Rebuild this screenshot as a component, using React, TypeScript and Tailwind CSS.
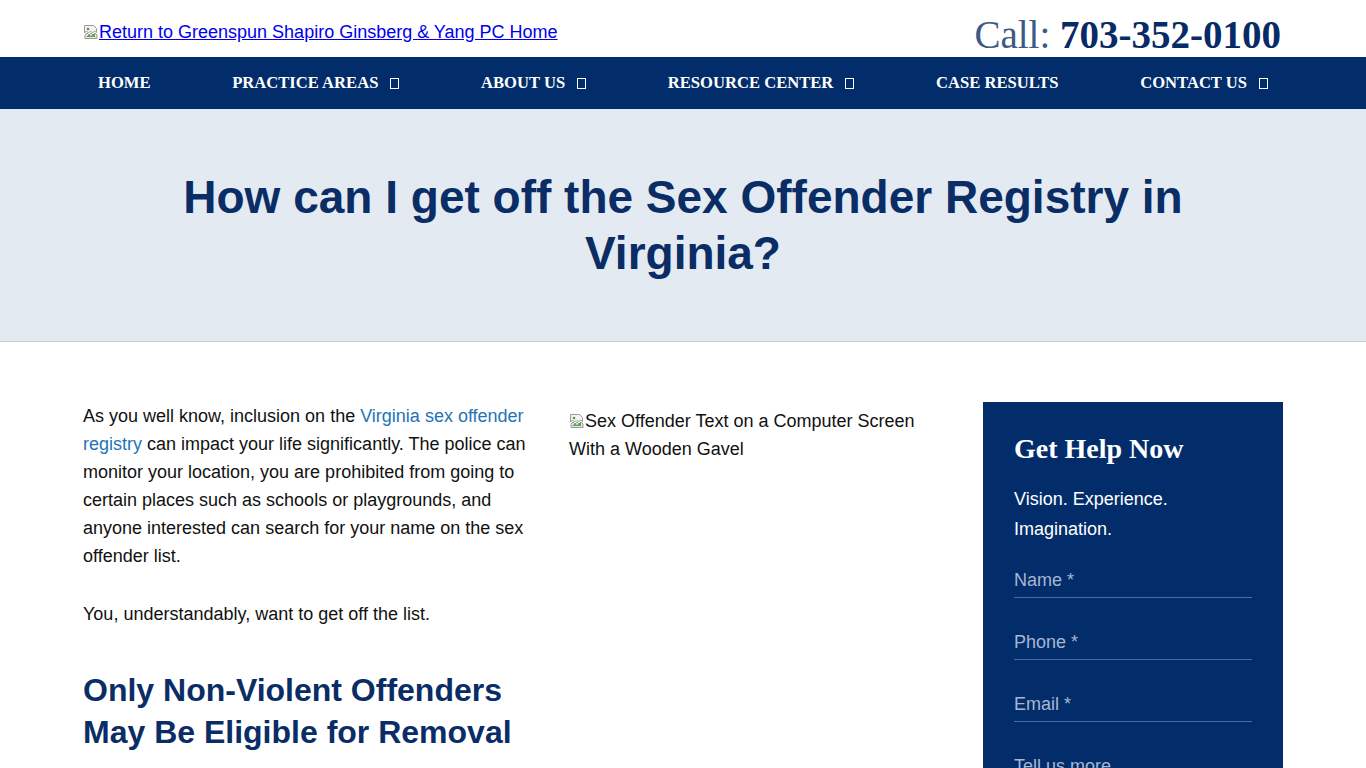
function Tofu() {
  return <span className="ml-[12px] inline-block h-[11px] w-[9px] border border-white align-[-1px]" />;
}

function BrokenImage() {
  return (
    <svg width="16" height="16" viewBox="0 0 16 16" className="inline-block align-[-2px]">
      <path d="M1.5 1.5h9l3 3v4l-2 -1.5-2 2-2-2-2 2-2-2-2 2z" fill="#f4f4f4" stroke="#9a9a9a" />
      <path d="M2 11l2-2 2 2 2-2 2 2 2-2 2 2v3.5H2z" fill="#e6e6e6" stroke="#9a9a9a" />
      <circle cx="5" cy="5" r="1.3" fill="#4a9e3a" />
      <path d="M3 13l3-2.5 2 1.5 4-3v4z" fill="#5aa845" />
    </svg>
  );
}

const navItems = [
  { label: "Home", drop: false },
  { label: "Practice Areas", drop: true },
  { label: "About Us", drop: true },
  { label: "Resource Center", drop: true },
  { label: "Case Results", drop: false },
  { label: "Contact Us", drop: true },
];

export default function App() {
  return (
    <div className="min-h-screen bg-white font-['Liberation_Sans',Arial,sans-serif] text-[18px] text-[#111]">
      {/* Header */}
      <header className="mx-auto flex h-[57px] max-w-[1200px] items-center justify-between">
        <a href="#" className="mt-[7px] flex items-center text-[18px] text-[#0000ee] underline">
          <BrokenImage />
          <span>Return to Greenspun Shapiro Ginsberg &amp; Yang PC Home</span>
        </a>
        <div className="mt-[12px] pr-[2px] font-['Liberation_Serif',serif] text-[39px] leading-none text-[#3c5a84]">
          Call: <span className="font-bold text-[#062b66]">703-352-0100</span>
        </div>
      </header>

      {/* Nav */}
      <nav className="bg-[#022d6a]">
        <ul className="mx-auto flex h-[52px] max-w-[1200px] items-center justify-between">
          {navItems.map((item) => (
            <li
              key={item.label}
              className="px-[15px] font-['Liberation_Serif',serif] text-[16.6px] font-bold uppercase text-white"
            >
              {item.label}
              {item.drop && <Tofu />}
            </li>
          ))}
        </ul>
      </nav>

      {/* Hero */}
      <section className="border-b border-[#c8ced6] bg-[#e4eaf2] py-[60px]">
        <h1 className="mx-auto max-w-[1060px] text-center text-[46px] font-bold leading-[56px] text-[#0a2d66]">
          How can I get off the Sex Offender Registry in Virginia?
        </h1>
      </section>

      {/* Content */}
      <main className="mx-auto flex max-w-[1200px] gap-[36px] pt-[60px]">
        <div className="flex flex-1 gap-[36px]">
          <article className="w-[450px] leading-[28px]">
            <p className="mb-[30px]">
              As you well know, inclusion on the{" "}
              <a href="#" className="text-[#1f73b7]">
                Virginia sex offender registry
              </a>{" "}
              can impact your life significantly. The police can monitor your location, you are prohibited from going to
              certain places such as schools or playgrounds, and anyone interested can search for your name on the sex
              offender list.
            </p>
            <p>You, understandably, want to get off the list.</p>
            <h2 className="mt-[41px] text-[32px] font-bold leading-[42px] text-[#0a2d66]">
              Only Non-Violent Offenders May Be Eligible for Removal
            </h2>
          </article>
          <div className="flex-1 pt-[5px] leading-[28px]">
            <BrokenImage />
            Sex Offender Text on a Computer Screen With a Wooden Gavel
          </div>
        </div>

        {/* Sidebar */}
        <aside className="h-[400px] w-[300px] bg-[#022d6a] px-[31px] pt-[30px] text-white">
          <h3 className="font-['Liberation_Serif',serif] text-[28px] font-bold leading-[34px]">Get Help Now</h3>
          <p className="mt-[18px] w-[180px] leading-[30px]">Vision. Experience. Imagination.</p>
          <form className="mt-[22px]">
            {["Name *", "Phone *", "Email *", "Tell us more"].map((label) => (
              <div key={label} className="mb-[30px] border-b border-[#4d6c9e] pb-[3px]">
                <input
                  placeholder={label}
                  className="w-full bg-transparent leading-[28px] text-white outline-none placeholder:text-[#a7b6d0]"
                />
              </div>
            ))}
          </form>
        </aside>
      </main>
    </div>
  );
}
